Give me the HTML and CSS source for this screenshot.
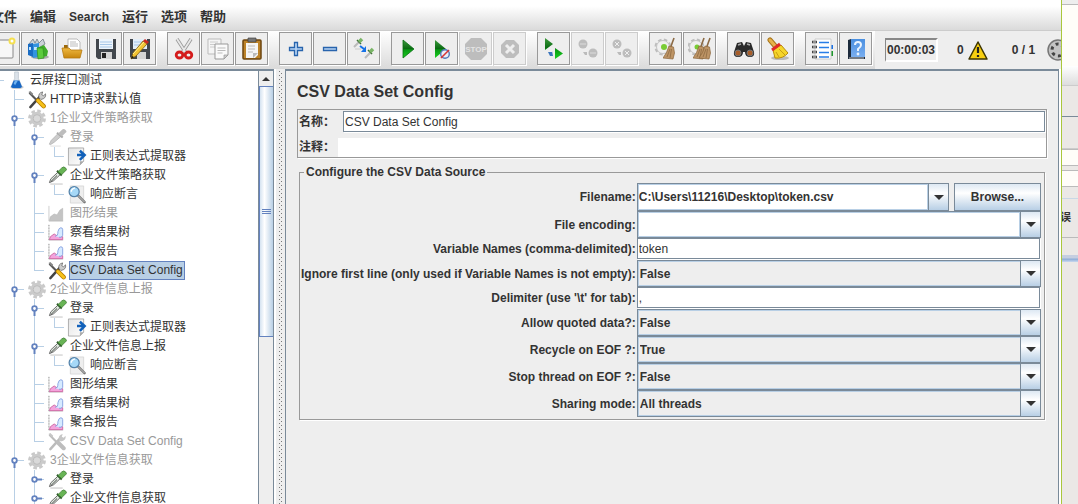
FILE: index.html
```
<!DOCTYPE html>
<html lang="zh-CN">
<head>
<meta charset="utf-8">
<title>CSV Data Set Config</title>
<link rel="stylesheet" href="styles.css">
</head>
<body>
<svg class="defs" aria-hidden="true">
  <defs>
    <linearGradient id="g-green" x2="0" y2="1"><stop offset="0" stop-color="#3d9a3d"/><stop offset=".48" stop-color="#0a6a12"/><stop offset=".55" stop-color="#0a9a14"/><stop offset="1" stop-color="#18d020"/></linearGradient>
    <linearGradient id="g-gold" x2="0" y2="1"><stop offset="0" stop-color="#efb941"/><stop offset="1" stop-color="#c8860c"/></linearGradient>
    <linearGradient id="g-blue" x2="0" y2="1"><stop offset="0" stop-color="#4a8fe0"/><stop offset="1" stop-color="#79aef0"/></linearGradient>
    <linearGradient id="g-paper" x2="1" y2="1"><stop offset="0" stop-color="#e4e4e4"/><stop offset="1" stop-color="#fff"/></linearGradient>
  </defs>
  <symbol id="t-flask" viewBox="0 0 20 20"><ellipse cx="10" cy="17" rx="7" ry="2" fill="#ccc"/><path d="M7.500 1h4v7l3.500 8q0 2-2 2H6q-2 0-2-2l3.500-8z" fill="#dce3ea" stroke="#b5bfc9" stroke-width=".7"/><path d="M6.500 10h6l2.500 6q0 2-2 2H6q-2 0-2-2z" fill="#1767c4"/><path d="M6.500 13l1.500-3h3l-3 5z" fill="#73b4ef"/></symbol>
  <symbol id="t-tools" viewBox="0 0 20 20"><path d="M3 18L13 7" stroke="#444" stroke-width="2.600" stroke-linecap="round"/><path d="M12 8q-1-5 4-6l-1 3 2 1 2-2q1 5-5 6z" fill="#ccc" stroke="#555" stroke-width=".7"/><path d="M2 3l8 8" stroke="#555" stroke-width="2.200"/><path d="M1 2l2-1 3 3-1 2z" fill="#888"/><path d="M11 11l6 6" stroke="#b67c00" stroke-width="4.600" stroke-linecap="round"/><path d="M11 11l6 6" stroke="#f6c21b" stroke-width="3" stroke-linecap="round"/></symbol>
  <symbol id="t-tools-off" viewBox="0 0 20 20"><path d="M3 18L13 7" stroke="#bbb" stroke-width="2.600" stroke-linecap="round"/><path d="M12 8q-1-5 4-6l-1 3 2 1 2-2q1 5-5 6z" fill="#c6c6c6"/><path d="M2 3l8 8" stroke="#bbb" stroke-width="2.200"/><path d="M1 2l2-1 3 3-1 2z" fill="#c6c6c6"/><path d="M11 11l6 6" stroke="#bdbdbd" stroke-width="4.400" stroke-linecap="round"/></symbol>
  <symbol id="t-gear" viewBox="0 0 20 20"><circle cx="10" cy="10" r="7.600" fill="none" stroke="#c9c9c9" stroke-width="3.600" stroke-dasharray="3.600 2.370"/><circle cx="10" cy="10" r="7" fill="#cbcbcb"/><circle cx="10" cy="10" r="4" fill="#d9d9d9" stroke="#bababa"/></symbol>
  <symbol id="t-drop" viewBox="0 0 20 20"><path d="M3 19h13" stroke="#d5d5d5" stroke-width="1.500"/><path d="M2 17.500l1.500-4L11 6.500l2.500 2.500-7 6.500z" fill="#dfe8df" stroke="#666" stroke-width="1"/><path d="M3.500 16.500L10 10" stroke="#444" stroke-width="1"/><path d="M10 5l5 5" stroke="#2f5a2b" stroke-width="2"/><path d="M11 6l4-4q2-2 4 0t0 3l-4 4z" fill="#68b455" stroke="#3c7a30" stroke-width=".8"/></symbol>
  <symbol id="t-drop-off" viewBox="0 0 20 20"><path d="M3 19h11" stroke="#ddd"/><path d="M2 17l2-4L11 6l3 3-7 6-4 2.500z" fill="#ccc" stroke="#b8b8b8"/><path d="M10 5l6 5" stroke="#aaa" stroke-width="2.200"/><path d="M11 6l4-4q2-2 4 0t0 3l-4 4z" fill="#bdbdbd"/></symbol>
  <symbol id="t-extract" viewBox="0 0 20 20"><path d="M1 1h16v14l-4 4H1z" fill="url(#g-paper)" stroke="#999" stroke-width=".8"/><path d="M17 15l-4 4v-4z" fill="#aaa"/><path d="M10 8.500h7M13 4l5 4.500-5 5" fill="none" stroke="#1261ba" stroke-width="2.700"/></symbol>
  <symbol id="t-lens" viewBox="0 0 20 20"><path d="M3 1h14v18H3z" fill="#eee" stroke="#d2d2d2" stroke-width=".8"/><path d="M11 11l7 7" stroke="#777" stroke-width="2.600" stroke-linecap="round"/><path d="M11 11l7 7" stroke="#ddd" stroke-width=".8"/><circle cx="7" cy="7" r="5.300" fill="#a5d8f7" stroke="#5381a8" stroke-width="1.300"/><path d="M4 7q0-3 4-4" stroke="#fff" fill="none" stroke-width="1.500"/></symbol>
  <symbol id="t-chart" viewBox="0 0 20 20"><path d="M1.500 2v16h15" fill="none" stroke="#ccc"/><path d="M1.500 2v16" stroke="#999" stroke-dasharray="1 2"/><path d="M2 17.500l1-3 4-3 3 2 6 1v3z" fill="#f5a3dc" stroke="#c9609c" stroke-width=".9"/><path d="M8 14q3 0 3-5 1-4 3-4t2 2v6q-1 3-4 2" fill="#d6eaff" stroke="#7e9ade" stroke-width=".9"/></symbol>
  <symbol id="t-chart-off" viewBox="0 0 20 20"><path d="M1.500 2v16h15" fill="none" stroke="#ccc"/><path d="M2 17.500l1-4 4-3 3 1 3-5 3-2v13z" fill="#c4c4c4" stroke="#b2b2b2" stroke-width=".6"/></symbol>
  <symbol id="stem-down" viewBox="0 0 20 19"><path d="M10.500 11v6" stroke="#6382bf" stroke-width="2"/><circle cx="10.500" cy="9.500" r="2.300" fill="#fff" stroke="#6382bf" stroke-width="1.800"/></symbol>
  <symbol id="stem-right" viewBox="0 0 20 19"><path d="M12 9.500h6" stroke="#6382bf" stroke-width="2"/><circle cx="10.500" cy="9.500" r="2.300" fill="#fff" stroke="#6382bf" stroke-width="1.800"/></symbol>
  <symbol id="down" viewBox="0 0 10 5"><path d="M0 0h10L5 5z" fill="#333"/></symbol>
  <symbol id="broom" viewBox="0 0 12 24"><path d="M11 1L7 12" stroke="#8b6a45" stroke-width="1.600"/><path d="M6 9l4.500 1 1 6-1.500 6L0 21q4-5 6-12z" fill="#bd9465" stroke="#8a643a" stroke-width=".7"/><path d="M7 12L4 20M8.500 12L7 21" stroke="#8d6a42" stroke-width=".8"/></symbol>
</svg>

<div class="desktop">
  <div class="app">
    <nav class="menubar">
      <button class="menu">文件</button><button class="menu">编辑</button><button class="menu">Search</button><button class="menu">运行</button><button class="menu">选项</button><button class="menu">帮助</button>
    </nav>

    <div class="topbar">
      <div class="toolbar">
        <div class="group">
          <button class="tool" aria-label="新建"><svg viewBox="0 0 24 24"><rect x="1" y="3" width="20" height="18" rx="1" fill="#f7f7f7" stroke="#888"/><circle cx="20" cy="4" r="2.500" fill="#fff" stroke="#f5e050" stroke-width="2"/></svg></button>
          <button class="tool" aria-label="模板"><svg viewBox="0 0 24 24"><ellipse cx="14" cy="20" rx="9" ry="2" fill="#aaa"/><path d="M3 7l4-5 2 4 2-4 2 4 4-4 2 5-8 5z" fill="#ccd3d8" stroke="#7b878e" stroke-width=".9"/><path d="M2 7l5-1v14l-5-2z" fill="#1a6dc4"/><path d="M7 7l6-1v14l-6 1z" fill="#3394e0"/><path d="M3 10h2v3H3zM8 10h3v3H8z" fill="#c3e5ff"/><path d="M11 11l7-3 4 6-1 5-9 2z" fill="#3fae2a"/><path d="M11 11h6l1 10-6 1z" fill="#5ccb3d" stroke="#2c8a1b" stroke-width=".6"/></svg></button>
          <button class="tool" aria-label="打开"><svg viewBox="0 0 24 24"><path d="M4 8h16v13H4z" fill="#9c690a"/><path d="M8 2h9l3 3v10H8z" fill="#fff" stroke="#aaa" stroke-width=".8"/><path d="M10 5h6M10 7h8M10 9h8" stroke="#bbb"/><path d="M2 11h7l2 2h11l-2 8H4z" fill="url(#g-gold)" stroke="#b57a10" stroke-width=".8"/></svg></button>
          <button class="tool" aria-label="保存"><svg viewBox="0 0 24 24"><path d="M2 2h20v20H4l-2-2z" fill="#42474d"/><path d="M5 2h14v10H5z" fill="#eef5fc"/><path d="M6 5h12M6 7.500h12M6 10h12" stroke="#a7c7e8"/><path d="M7 15h11v7H7z" fill="#d5d5d5"/><path d="M8 16h4v5H8z" fill="#222"/></svg></button>
          <button class="tool" aria-label="另存为"><svg viewBox="0 0 24 24"><path d="M2 2h20v20H4l-2-2z" fill="#42474d"/><path d="M5 2h14v10H5z" fill="#e3eef9"/><path d="M6 5h12M6 8h12" stroke="#a7c7e8"/><path d="M9 15h9v7H9z" fill="#d5d5d5"/><path d="M3 22l2-6L15 4l4 3L8 19z" fill="#f3c433" stroke="#7d5b0a" stroke-width=".8"/><path d="M15 4l2-2 4 3-2 2z" fill="#cf2a20"/><path d="M5 17L16 5" stroke="#fff09a"/><path d="M3 22l1-3 2 1z" fill="#111"/></svg></button>
        </div>
        <div class="group">
          <button class="tool" aria-label="剪切"><svg viewBox="0 0 24 24"><path d="M5 2l9 14M19 2l-9 14" stroke="#999" stroke-width="3.400"/><path d="M5 2l9 14M19 2l-9 14" stroke="#e8e8e8" stroke-width="1.800"/><ellipse cx="7.500" cy="18" rx="3.300" ry="3" fill="none" stroke="#d41c1c" stroke-width="2.800"/><ellipse cx="16.500" cy="18" rx="3.300" ry="3" fill="none" stroke="#d41c1c" stroke-width="2.800"/></svg></button>
          <button class="tool" aria-label="复制"><svg viewBox="0 0 24 24"><path d="M2 2h13v15H2z" fill="#f5f5f5" stroke="#bbb"/><path d="M4 5h8M4 7.500h5M4 10h5" stroke="#ccc"/><path d="M9 7h13v11l-4 4H9z" fill="#fafafa" stroke="#999"/><path d="M11.500 11h8M11.500 13.500h8M11.500 16h5" stroke="#bbb"/><path d="M22 18h-4v4z" fill="#ccc" stroke="#999" stroke-width=".7"/></svg></button>
          <button class="tool" aria-label="粘贴"><svg viewBox="0 0 24 24"><rect x="3" y="3" width="18" height="19" rx="1" fill="#bd8329" stroke="#6c4610" stroke-width="1.500"/><path d="M6 6h12v12l-3 3H6z" fill="#f5f5f5"/><path d="M8 1h8v4H8z" fill="#777" stroke="#444" stroke-width=".7"/><path d="M8 9h7M8 12h7M8 15h5" stroke="#bbb"/><path d="M18 16l-5 5v-5z" fill="#bbb"/></svg></button>
        </div>
        <div class="group">
          <button class="tool" aria-label="展开"><svg viewBox="0 0 24 24"><path d="M10.500 5.500h3v5h5v3h-5v5h-3v-5h-5v-3h5z" fill="#b8d4f4" stroke="#2864ad" stroke-width="1.300"/></svg></button>
          <button class="tool" aria-label="折叠"><svg viewBox="0 0 24 24"><path d="M5.500 10.500h13v3h-13z" fill="#b8d4f4" stroke="#2864ad" stroke-width="1.300"/></svg></button>
          <button class="tool" aria-label="切换"><svg viewBox="0 0 24 24"><path d="M2 10l5-5M13 21l5-5" stroke="#bbb" stroke-width="2"/><path d="M5 3l4 4M16 13l4 4" stroke="#3e6b36" stroke-width="1.500"/><path d="M7 5l3-3M18 15l3-3" stroke="#7ab567" stroke-width="3.500"/><path d="M3 12h6" stroke="#ccc"/><path d="M8 9l4 3" stroke="#1672e8" stroke-width="2"/><path d="M14 9v6H9z" fill="#1672e8"/></svg></button>
        </div>
        <div class="group">
          <button class="tool" aria-label="启动"><svg viewBox="0 0 24 24"><path d="M7 3l11 9L7 21z" fill="url(#g-green)" stroke="#087011" stroke-width=".8"/></svg></button>
          <button class="tool" aria-label="不停顿开始"><svg viewBox="0 0 24 24"><path d="M5 3l11 9L5 21z" fill="url(#g-green)"/><circle cx="15" cy="17" r="4.300" fill="#e9eef8" stroke="#5279b9" stroke-width="1.400"/><path d="M11 21l8-8" stroke="#d63535" stroke-width="1.600"/></svg></button>
          <button class="tool" disabled aria-label="停止"><svg viewBox="0 0 24 24"><path d="M7 1h10l6 6v10l-6 6H7l-6-6V7z" fill="#bdbdbd"/><text class="stop-text" x="12" y="15" text-anchor="middle">STOP</text></svg></button>
          <button class="tool" disabled aria-label="关闭"><svg viewBox="0 0 24 24"><path d="M8 3h8l5 5v8l-5 5H8l-5-5V8z" fill="#bdbdbd"/><path d="M8 8l8 8M16 8l-8 8" stroke="#eee" stroke-width="3"/></svg></button>
        </div>
        <div class="group">
          <button class="tool" aria-label="远程启动"><svg viewBox="0 0 24 24"><path d="M3 1l8 6-8 6zM13 11l8 5.500-8 5.500z" fill="url(#g-green)"/><path d="M6 15h4v-1l1 5H8z" fill="#3c76bd"/></svg></button>
          <button class="tool" disabled aria-label="远程停止"><svg viewBox="0 0 24 24"><circle cx="7" cy="7" r="4.500" fill="#bdbdbd"/><circle cx="17" cy="16" r="4.500" fill="#bdbdbd"/><path d="M4 7h6M14 16h6" stroke="#ccc" stroke-width="2"/><path d="M7 15h4v3H9z" fill="#bbb"/></svg></button>
          <button class="tool" disabled aria-label="远程关闭"><svg viewBox="0 0 24 24"><circle cx="7" cy="7" r="4.500" fill="#bdbdbd"/><circle cx="17" cy="16" r="4.500" fill="#bdbdbd"/><path d="M5 5l4 4M9 5L5 9M15 14l4 4M19 14l-4 4" stroke="#eee"/><path d="M7 15h4v3H9z" fill="#bbb"/></svg></button>
        </div>
        <div class="group">
          <button class="tool" aria-label="清除"><svg viewBox="0 0 24 24"><circle cx="9" cy="10" r="6.500" fill="none" stroke="#bdbdbd" stroke-width="4" stroke-dasharray="3 2.100"/><circle cx="9" cy="10" r="6.500" fill="#f0f0f0" stroke="#c4c4c4"/><circle cx="10" cy="10" r="3" fill="#79cc35"/><use href="#broom" x="9" width="12" height="24"/></svg></button>
          <button class="tool" aria-label="清除全部"><svg viewBox="0 0 24 24"><circle cx="8" cy="10" r="6.500" fill="none" stroke="#bdbdbd" stroke-width="4" stroke-dasharray="3 2.100"/><circle cx="8" cy="10" r="6.500" fill="#f0f0f0" stroke="#c4c4c4"/><circle cx="9" cy="10" r="2.500" fill="#79cc35"/><use href="#broom" x="5" width="12" height="24"/><use href="#broom" x="11" width="12" height="24"/></svg></button>
        </div>
        <div class="group">
          <button class="tool" aria-label="查找"><svg viewBox="0 0 24 24"><path d="M5 6l5-1 2 4 2-4 5 1 3 9q1 5-4 5-5 0-5-5h-2q0 5-5 5T2 15z" fill="#292929"/><path d="M6 8l3-1M15 7l3 1" stroke="#aaa" stroke-width="1.500"/><circle cx="6" cy="16" r="3" fill="#a85e2a" stroke="#777"/><circle cx="18" cy="16" r="3" fill="#a85e2a" stroke="#777"/></svg></button>
          <button class="tool" aria-label="重置查找"><svg viewBox="0 0 24 24"><ellipse cx="14" cy="21" rx="9" ry="2" fill="#bbb"/><path d="M4 3l6 7" stroke="#a8761b" stroke-width="5" stroke-linecap="round"/><path d="M4 3l6 7" stroke="#e7b14b" stroke-width="3" stroke-linecap="round"/><path d="M7 13l8-5 7 8q-5 6-13 5z" fill="#f5d529" stroke="#b88c0c"/><path d="M10 15l3 5M13 12l6 6" stroke="#c99d15"/><path d="M6 13l8-6" stroke="#df2929" stroke-width="3"/></svg></button>
        </div>
        <div class="group">
          <button class="tool" aria-label="函数助手"><svg viewBox="0 0 24 24"><path d="M19 8h4v4h-4z" fill="#1b72e5"/><path d="M19 14h4v5h-4z" fill="#20992e"/><path d="M5 2h16v20H5z" fill="#fff" stroke="#ccc"/><path d="M9 5.500h10M9 10.500h10M9 15.500h10M9 20h10" stroke="#287ee7" stroke-width="1.300"/><path d="M2 5h5M2 10h5M2 15h5M2 20h5" stroke="#444" stroke-width="2.500"/><path d="M3 5h3M3 10h3M3 15h3M3 20h3" stroke="#ddd"/></svg></button>
          <button class="tool" aria-label="帮助"><svg viewBox="0 0 24 24"><path d="M4 3l3-1h14v20H4z" fill="#1d2b3c"/><path d="M7 2h14v18H7z" fill="url(#g-blue)"/><path d="M5 21h15" stroke="#ccc"/><path d="M11 8q0-3 3-3t3 3q0 2-3 4v2" fill="none" stroke="#eaf4ff" stroke-width="2"/><circle cx="14" cy="17" r="1.400" fill="#eaf4ff"/></svg></button>
        </div>
      </div>
      <div class="status">
        <output class="clock">00:00:03</output>
        <div class="errors"><span>0</span><svg class="warn" viewBox="0 0 20 19"><path d="M10 1l9 17H1z" fill="#f8cf10" stroke="#3d3500" stroke-width="1.500" stroke-linejoin="round"/><path d="M10 6v6M10 14v2" stroke="#222" stroke-width="2.200"/></svg></div>
        <span>0 / 1</span>
        <svg class="spinner" viewBox="0 0 24 24"><circle cx="12" cy="12" r="10" fill="#c4c4c4" stroke="#777" stroke-width="1.500"/><circle cx="12" cy="12" r="6" fill="none" stroke="#444" stroke-width="3" stroke-dasharray="3 3.280"/></svg>
      </div>
    </div>

    <div class="workspace">
      <aside class="sidebar">
        <div class="tree-view">
          <ul class="tree">
            <li><div class="row"><span class="twist"></span><svg class="icon"><use href="#t-flask"/></svg><span class="label">云屏接口测试</span></div>
              <ul>
                <li><div class="row"><span class="twist"></span><svg class="icon"><use href="#t-tools"/></svg><span class="label">HTTP请求默认值</span></div></li>
                <li><div class="row off"><button class="twist" aria-label="折叠"><svg><use href="#stem-down"/></svg></button><svg class="icon"><use href="#t-gear"/></svg><span class="label">1企业文件策略获取</span></div>
                  <ul>
                    <li><div class="row off"><button class="twist" aria-label="折叠"><svg><use href="#stem-down"/></svg></button><svg class="icon"><use href="#t-drop-off"/></svg><span class="label">登录</span></div>
                      <ul><li><div class="row"><span class="twist"></span><svg class="icon"><use href="#t-extract"/></svg><span class="label">正则表达式提取器</span></div></li></ul></li>
                    <li><div class="row"><button class="twist" aria-label="折叠"><svg><use href="#stem-down"/></svg></button><svg class="icon"><use href="#t-drop"/></svg><span class="label">企业文件策略获取</span></div>
                      <ul><li><div class="row"><span class="twist"></span><svg class="icon"><use href="#t-lens"/></svg><span class="label">响应断言</span></div></li></ul></li>
                    <li><div class="row off"><span class="twist"></span><svg class="icon"><use href="#t-chart-off"/></svg><span class="label">图形结果</span></div></li>
                    <li><div class="row"><span class="twist"></span><svg class="icon"><use href="#t-chart"/></svg><span class="label">察看结果树</span></div></li>
                    <li><div class="row"><span class="twist"></span><svg class="icon"><use href="#t-chart"/></svg><span class="label">聚合报告</span></div></li>
                    <li><div class="row selected"><span class="twist"></span><svg class="icon"><use href="#t-tools"/></svg><span class="label">CSV Data Set Config</span></div></li>
                  </ul></li>
                <li><div class="row off"><button class="twist" aria-label="折叠"><svg><use href="#stem-down"/></svg></button><svg class="icon"><use href="#t-gear"/></svg><span class="label">2企业文件信息上报</span></div>
                  <ul>
                    <li><div class="row"><button class="twist" aria-label="折叠"><svg><use href="#stem-down"/></svg></button><svg class="icon"><use href="#t-drop"/></svg><span class="label">登录</span></div>
                      <ul><li><div class="row"><span class="twist"></span><svg class="icon"><use href="#t-extract"/></svg><span class="label">正则表达式提取器</span></div></li></ul></li>
                    <li><div class="row"><button class="twist" aria-label="折叠"><svg><use href="#stem-down"/></svg></button><svg class="icon"><use href="#t-drop"/></svg><span class="label">企业文件信息上报</span></div>
                      <ul><li><div class="row"><span class="twist"></span><svg class="icon"><use href="#t-lens"/></svg><span class="label">响应断言</span></div></li></ul></li>
                    <li><div class="row"><span class="twist"></span><svg class="icon"><use href="#t-chart"/></svg><span class="label">图形结果</span></div></li>
                    <li><div class="row"><span class="twist"></span><svg class="icon"><use href="#t-chart"/></svg><span class="label">察看结果树</span></div></li>
                    <li><div class="row"><span class="twist"></span><svg class="icon"><use href="#t-chart"/></svg><span class="label">聚合报告</span></div></li>
                    <li><div class="row off"><span class="twist"></span><svg class="icon"><use href="#t-tools-off"/></svg><span class="label">CSV Data Set Config</span></div></li>
                  </ul></li>
                <li class="more"><div class="row off"><button class="twist" aria-label="折叠"><svg><use href="#stem-down"/></svg></button><svg class="icon"><use href="#t-gear"/></svg><span class="label">3企业文件信息获取</span></div>
                  <ul>
                    <li><div class="row"><button class="twist" aria-label="展开"><svg><use href="#stem-right"/></svg></button><svg class="icon"><use href="#t-drop"/></svg><span class="label">登录</span></div></li>
                    <li class="more"><div class="row"><button class="twist" aria-label="展开"><svg><use href="#stem-right"/></svg></button><svg class="icon"><use href="#t-drop"/></svg><span class="label">企业文件信息获取</span></div></li>
                  </ul></li>
              </ul></li>
          </ul>
        </div>
        <div class="scrollbar">
          <button class="scroll-up" aria-label="向上滚动"><svg viewBox="0 0 8 4"><path d="M0 4h8L4 0z" fill="#333"/></svg></button>
          <div class="thumb"><span class="grip"></span></div>
        </div>
      </aside>
      <div class="splitter"><div class="bumps"></div></div>

      <main class="panel">
        <h1>CSV Data Set Config</h1>
        <div class="naming">
          <div class="name-row"><label for="name">名称：</label><input id="name" class="field" value="CSV Data Set Config"></div>
          <div class="comment-row"><label for="comment">注释：</label><input id="comment" class="plain"></div>
        </div>
        <fieldset class="source">
          <legend>Configure the CSV Data Source</legend>
          <div class="form">
            <label for="file">Filename:</label>
            <div class="file">
              <div class="combo"><input id="file" value="C:\Users\11216\Desktop\token.csv"><button class="arrow" aria-label="Recent files"><svg><use href="#down"/></svg></button></div>
              <button class="browse">Browse...</button>
            </div>
            <label for="enc">File encoding:</label>
            <div class="combo"><input id="enc"><button class="arrow" aria-label="Encodings"><svg><use href="#down"/></svg></button></div>
            <label for="vars">Variable Names (comma-delimited):</label>
            <input id="vars" class="field" value="token">
            <label for="ignore">Ignore first line (only used if Variable Names is not empty):</label>
            <div class="combo"><select id="ignore"><option>False</option><option>True</option></select><span class="arrow"><svg><use href="#down"/></svg></span></div>
            <label for="delim">Delimiter (use '\t' for tab):</label>
            <input id="delim" class="field" value=",">
            <label for="quoted">Allow quoted data?:</label>
            <div class="combo"><select id="quoted"><option>False</option><option>True</option></select><span class="arrow"><svg><use href="#down"/></svg></span></div>
            <label for="recycle">Recycle on EOF ?:</label>
            <div class="combo"><select id="recycle"><option>True</option><option>False</option></select><span class="arrow"><svg><use href="#down"/></svg></span></div>
            <label for="stop">Stop thread on EOF ?:</label>
            <div class="combo"><select id="stop"><option>False</option><option>True</option></select><span class="arrow"><svg><use href="#down"/></svg></span></div>
            <label for="share">Sharing mode:</label>
            <div class="combo"><select id="share"><option>All threads</option></select><span class="arrow"><svg><use href="#down"/></svg></span></div>
          </div>
        </fieldset>
      </main>
    </div>
  </div>

  <div class="behind">
    <div class="b-title"></div>
    <div class="b-sheet"></div>
    <div class="b-bar"></div>
    <div class="b-gap"></div>
    <div class="b-head"></div>
    <div class="b-input"></div>
    <div class="b-space"></div>
    <div class="b-input"></div>
    <div class="b-blank"></div>
    <div class="b-text">误</div>
    <div class="b-foot"></div>
    <div class="b-blue"></div>
  </div>
</div>
</body>
</html>
```

FILE: styles.css
```
* { box-sizing: border-box; }

body {
  margin: 0;
  font: 12px/16px "Liberation Sans", "Noto Sans CJK SC", sans-serif;
  color: #333;
  background: #eee;
}

button, input, select { font: inherit; color: inherit; margin: 0; padding: 0; border: 0; border-radius: 0; }
ul { list-style: none; margin: 0; padding: 0; }
.defs { display: block; width: 0; height: 0; }

.desktop { display: grid; grid-template-columns: minmax(0, 1fr) 16px; height: 100vh; overflow: hidden; }
.app { display: flex; flex-direction: column; min-width: 0; min-height: 0; overflow: hidden; border-right: 1px solid #a9c73c; background: #eee; }

/* Menu bar */
.menubar { display: flex; gap: 13px; height: 31px; flex: none; padding-top: 3px; background: linear-gradient(#fff 20%, #dadada); border-bottom: 1px solid #ccc; }
.menu { background: none; font-weight: bold; font-size: 13px; white-space: nowrap; }
.menu:first-child { margin-left: -9px; }
.menu:nth-child(3) { font-size: 12px; }

/* Toolbar */
.topbar { display: flex; flex: none; height: 38px; }
.toolbar { display: flex; gap: 11px; flex: none; margin-left: -13px; padding: 1px 3px 0 0; background: linear-gradient(#fff, #dadada); }
.group { display: flex; gap: 1px; }
.tool { display: grid; place-items: center; width: 33px; height: 33px; background: #eee; border: 1px solid #999; box-shadow: 1px 1px #fff; }
.tool:disabled { border-color: #ccc; }
.tool svg { width: 24px; height: 24px; }
.stop-text { font: bold 8px "Liberation Sans", sans-serif; fill: #e4e4e4; }

.status { display: flex; flex: 1; align-items: center; min-width: 0; padding-left: 10px; font-weight: bold; white-space: nowrap; }
.clock { flex: none; padding: 2px 1px 2px 1px; margin-right: 19px; border: 1px solid #888; border-width: 2px 2px 2px 1px; border-right-color: #fff; border-bottom-color: #fff; }
.errors { display: flex; flex: none; align-items: center; gap: 4px; margin-right: 24px; }
.warn { width: 20px; height: 19px; }
.spinner { flex: none; width: 24px; height: 24px; margin-left: 11px; }

/* Main area */
.workspace { display: flex; flex: 1; min-height: 0; }
.sidebar { display: flex; flex: 0 0 274px; min-width: 0; border-top: 2px solid #7a8a99; border-right: 1px solid #7a8a99; background: #fff; }
.tree-view { flex: 1; min-width: 0; overflow: hidden; }
.tree { margin-left: -16px; }
.tree li { background: linear-gradient(#b8cfe5, #b8cfe5) 10px 0 / 1px 100% no-repeat; }
.tree li:last-child { background-size: 1px 10px; }
.tree li.more:last-child { background-size: 1px 100%; }
.tree ul { margin-left: 20px; }
.row { display: flex; align-items: center; height: 19px; background: linear-gradient(#b8cfe5, #b8cfe5) 10px 9px / 10px 1px no-repeat; white-space: nowrap; }
.twist { flex: none; width: 20px; height: 19px; margin-right: 3px; background: none; }
.twist svg { display: block; width: 20px; height: 19px; }
.icon { flex: none; width: 20px; height: 19px; margin-right: 2px; }
.label { height: 19px; padding: 0 1px 0 0; border: 1px solid transparent; line-height: 17px; }
.off { color: #999; }
.selected .label { background: #b8cfe5; border-color: #6382bf; }

.scrollbar { flex: 0 0 15px; display: flex; flex-direction: column; border-left: 1px solid #7a8a99; background: #eee; }
.scroll-up { display: grid; place-items: center; height: 15px; background: #eee; }
.scroll-up svg { width: 8px; height: 4px; }
.thumb { display: grid; place-items: center; height: 58%; border: 1px solid #6382bf; border-right: 0; background: linear-gradient(90deg, #d5e3f1, #fff 35%, #b8cfe5); }
.grip { width: 9px; height: 5px; border: 1px solid #6382bf; border-width: 1px 0; background: linear-gradient(#6382bf, #6382bf) 0 1px / 100% 1px no-repeat; }

.splitter { flex: 0 0 10px; padding: 2px 2px 0 3px; background: #eee; border-left: 2px solid #fff; }
.bumps { width: 4px; height: 100%; background: conic-gradient(at 1px 1px, transparent 75%, #777 0) 0 0 / 4px 4px, conic-gradient(at 1px 1px, transparent 75%, #777 0) 2px 2px / 4px 4px; }

.panel { flex: 1; min-width: 0; margin-right: 2px; padding: 11px 11px 0 11px; border: 1px solid #7a8a99; border-bottom: 0; border-top-width: 2px; box-shadow: 2px 0 #fff; }
h1 { margin: 0; font-size: 16px; line-height: 20px; }

.naming { margin-top: 7px; padding: 1px 0 0 1px; border: 1px solid #999; box-shadow: 1px 1px #fff; }
.naming label { font-weight: bold; font-size: 12px; line-height: 20px; white-space: nowrap; }
.name-row, .comment-row { display: grid; align-items: center; }
.name-row { grid-template-columns: 44px 1fr; }
.comment-row { grid-template-columns: 39px 1fr; margin-top: 4px; }
.plain { height: 19px; width: 100%; background: #fff; }

.field { width: calc(100% - 1px); height: 21px; margin: 0 1px 1px 0; padding: 0 1px; background: #fff; border: 1px solid #7a8a99; box-shadow: 1px 1px #fff; }

.source { margin: 6px 2px 0; padding: 3px 3px 2px 1px; min-width: 0; border: 1px solid #999; box-shadow: 1px 1px #fff; }
.source legend { margin-left: 3px; padding: 0 2px; font-weight: bold; }
.form { display: grid; grid-template-columns: max-content minmax(0, 1fr); column-gap: 1px; align-items: center; }
.form label { text-align: right; font-weight: bold; }
.file { display: grid; grid-template-columns: minmax(0, 1fr) 87px; gap: 5px; }

.combo { display: grid; grid-template-columns: minmax(0, 1fr) 20px; height: 27px; border: 1px solid #7a8a99; font-weight: bold; }
.file .combo, .browse { height: 28px; }
.combo select, .combo input { grid-area: 1 / 1; width: 100%; height: 100%; padding: 0 1px; border: 1px solid #b8cfe5; }
.combo select { grid-column: 1 / 3; appearance: none; background: #eee; }
.combo input { background: #fff; padding-left: 0; }
.arrow { grid-area: 1 / 2; display: grid; place-items: center; border-left: 1px solid #7a8a99; background: linear-gradient(#dde8f3, #fff 35%, #b8cfe5); pointer-events: none; }
.arrow svg { width: 10px; height: 5px; }
.browse { font-weight: bold; border: 1px solid #7a8a99; background: linear-gradient(#dde8f3, #fff 35%, #b8cfe5); }

/* Window showing behind the right edge */
.behind { display: flex; flex-direction: column; overflow: hidden; background: #ebe8e6; }
.behind div { flex: none; }
.b-title { height: 5px; background: #eee; border-bottom: 1px solid #bbb; }
.b-sheet { height: 61px; background: #fffdf9; }
.b-bar { height: 20px; background: linear-gradient(#fff, #ddd); border-bottom: 1px solid #ccc; }
.b-gap { height: 31px; border-bottom: 1px solid #7a8a99; }
.b-head { height: 32px; border-bottom: 1px solid #ccc; }
.b-input { height: 17px; background: #fffdf9; border: 1px solid #bbb; border-width: 1px 0; }
.b-space { height: 4px; }
.b-blank { height: 12px; border-bottom: 1px solid #c9d8e6; }
.b-text { height: 39px; padding-top: 10px; overflow: hidden; text-indent: -2px; font-size: 11px; font-weight: bold; border-bottom: 1px solid #bbb; }
.b-foot { height: 17px; }
.b-blue { height: 7px; background: linear-gradient(#c5cee0 40%, #8faed8 60%, #c9d8ee); }
```
